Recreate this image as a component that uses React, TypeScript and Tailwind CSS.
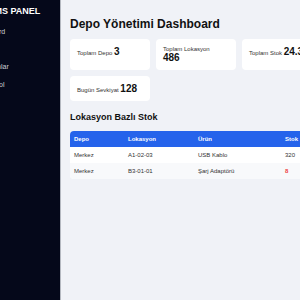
export default function App() {
  const items = ["Dashboard", "Depolar", "Lokasyonlar", "Ön Kontrol"];
  const rows = [
    { depo: "Merkez", lok: "A1-02-03", urun: "USB Kablo", stok: "320", low: false },
    { depo: "Merkez", lok: "B3-01-01", urun: "Şarj Adaptörü", stok: "8", low: true },
  ];
  return (
    <div className="flex w-[300px] h-[300px] overflow-hidden font-['Liberation_Sans',Arial,sans-serif]">
      <aside className="w-[61px] shrink-0 h-full bg-[#05081a] border-r border-[#b4b8c0] overflow-hidden">
        <div className="-ml-[29px] w-[120px] pt-[6px]">
          <div className="ml-[15px] text-[9px] leading-[10px] font-bold text-white whitespace-nowrap">
            WMS PANEL
          </div>
          <ul className="mt-[7.35px]">
            {items.map((i) => (
              <li key={i} className="text-[7px] leading-[17.5px] text-[#c9cdd6] whitespace-nowrap">
                {i}
              </li>
            ))}
          </ul>
        </div>
      </aside>
      <main className="flex-1 min-w-0 h-full bg-[#f0f2f7] pl-[9px] pt-[17px]">
        <h1 className="text-[12px] leading-[14px] font-bold text-[#111] whitespace-nowrap">
          Depo Yönetimi Dashboard
        </h1>
        <div className="mt-[8px] grid grid-cols-[80px_80px_80px] gap-[6px] w-[252px]">
          <div className="bg-white rounded-[4px] px-[7px] py-[7px] text-[6px] leading-[normal] text-[#333]">
            Toplam Depo <strong className="text-[10px] text-[#111]">3</strong>
          </div>
          <div className="bg-white rounded-[4px] px-[7px] py-[7px] text-[6px] leading-[normal] text-[#333]">
            Toplam Lokasyon <strong className="block text-[10px] text-[#111]">486</strong>
          </div>
          <div className="bg-white rounded-[4px] px-[7px] py-[7px] text-[6px] leading-[normal] text-[#333] whitespace-nowrap">
            Toplam Stok <strong className="text-[10px] text-[#111]">24.350</strong>
          </div>
          <div className="bg-white rounded-[4px] px-[7px] py-[7px] text-[6px] leading-[normal] text-[#333]">
            Bugün Sevkiyat <strong className="text-[10px] text-[#111]">128</strong>
          </div>
        </div>
        <h2 className="mt-[11px] text-[9px] leading-[10px] font-bold text-[#111] whitespace-nowrap">
          Lokasyon Bazlı Stok
        </h2>
        <div className="mt-[8.5px] w-[252px] rounded-[4px] overflow-hidden bg-white">
          <table className="w-[252px] table-fixed border-collapse text-[6px] leading-[normal]">
            <thead>
              <tr className="bg-[#2563eb] text-white">
                <th className="w-[54px] h-[16.5px] px-[4px] text-left font-bold">Depo</th>
                <th className="w-[70px] h-[16.5px] px-[4px] text-left font-bold">Lokasyon</th>
                <th className="w-[87px] h-[16.5px] px-[4px] text-left font-bold">Ürün</th>
                <th className="w-[41px] h-[16.5px] px-[4px] text-left font-bold">Stok</th>
              </tr>
            </thead>
            <tbody>
              {rows.map((r, idx) => (
                <tr key={idx} className={idx % 2 === 0 ? "bg-white" : "bg-[#f8f9fb]"}>
                  <td className="h-[16px] px-[4px] text-[#333]">{r.depo}</td>
                  <td className="h-[16px] px-[4px] text-[#333]">{r.lok}</td>
                  <td className="h-[16px] px-[4px] text-[#333] whitespace-nowrap">{r.urun}</td>
                  <td className={"h-[16px] px-[4px] " + (r.low ? "text-[#ef4444] font-bold" : "text-[#333]")}>
                    {r.stok}
                  </td>
                </tr>
              ))}
            </tbody>
          </table>
        </div>
      </main>
    </div>
  );
}
